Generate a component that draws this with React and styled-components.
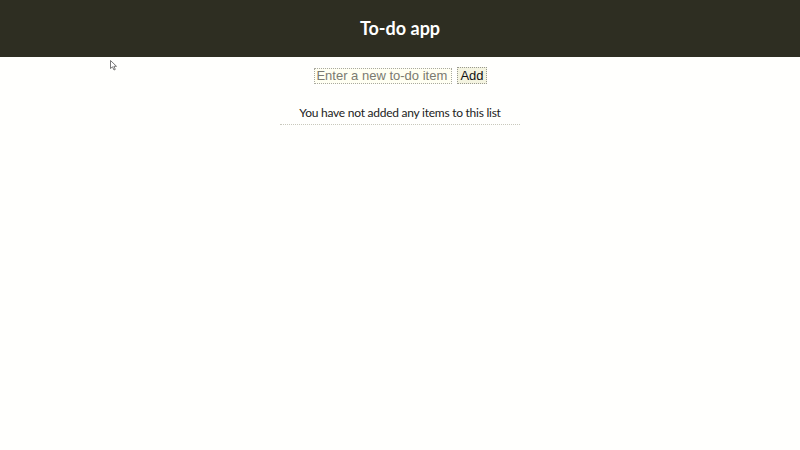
import { useState } from 'react';
import styled, { createGlobalStyle } from 'styled-components';

const GlobalStyle = createGlobalStyle`
  html, body {
    margin: 0;
    padding: 0;
    background: #fffffd;
  }

  body {
    font-family: Lato, 'Open Sans', sans-serif;
    color: #222;
  }
`;

const Page = styled.div`
  min-height: 450px;
  position: relative;
`;

const Header = styled.header`
  height: 57px;
  background: #2e2e22;
  display: flex;
  align-items: center;
  justify-content: center;

  h1 {
    margin: 0 0 2px;
    color: #fff;
    font-size: 18px;
    font-weight: 700;
    font-family: Lato, 'Open Sans', sans-serif;
  }
`;

const Main = styled.main`
  display: flex;
  flex-direction: column;
  align-items: center;
  padding-top: 10px;
`;

const AddForm = styled.form`
  display: flex;
  align-items: center;
  gap: 5px;
  margin-left: 1px;
`;

const TextInput = styled.input`
  width: 134px;
  height: 14px;
  padding: 0 1px;
  border: 1px dotted #a9a9a0;
  background: #fffff2;
  font-family: 'Liberation Sans', Arial, sans-serif;
  font-size: 13px;
  color: #333;
  outline: none;

  &::placeholder {
    color: #7a7a70;
  }
`;

const AddButton = styled.button`
  height: 17px;
  padding: 0 2px;
  border: 1px dotted #999990;
  background: #f4f4e0;
  font-family: 'Liberation Sans', Arial, sans-serif;
  font-size: 13px;
  color: #111;
  line-height: 1;
  cursor: pointer;
`;

const EmptyNote = styled.p`
  margin: 21px 0 0;
  width: 240px;
  padding-bottom: 4px;
  border-bottom: 1px dotted #c8c8bc;
  text-align: center;
  font-size: 12px;
  letter-spacing: -0.25px;
  color: #222;
`;

const Cursor = styled.svg`
  position: absolute;
  left: 110px;
  top: 60px;
`;

const App = () => {
  const [text, setText] = useState('');
  const [items, setItems] = useState([]);

  const onSubmit = (e) => {
    e.preventDefault();
    if (!text.trim()) return;
    setItems([...items, text.trim()]);
    setText('');
  };

  return (
    <Page>
      <GlobalStyle />
      <Header>
        <h1>To-do app</h1>
      </Header>
      <Main>
        <AddForm onSubmit={onSubmit}>
          <TextInput
            value={text}
            onChange={(e) => setText(e.target.value)}
            placeholder="Enter a new to-do item"
          />
          <AddButton type="submit">Add</AddButton>
        </AddForm>
        {items.length === 0 ? (
          <EmptyNote>You have not added any items to this list</EmptyNote>
        ) : (
          items.map((item) => <EmptyNote key={item}>{item}</EmptyNote>)
        )}
      </Main>
      <Cursor width="8" height="11" viewBox="0 0 8 11">
        <path d="M0.5 0.5 L0.5 8.5 L2.5 6.8 L4 10 L5.3 9.4 L3.9 6.3 L6.5 6.3 Z" fill="#fff" stroke="#555" strokeWidth="0.8" />
      </Cursor>
    </Page>
  );
};

export default App;
